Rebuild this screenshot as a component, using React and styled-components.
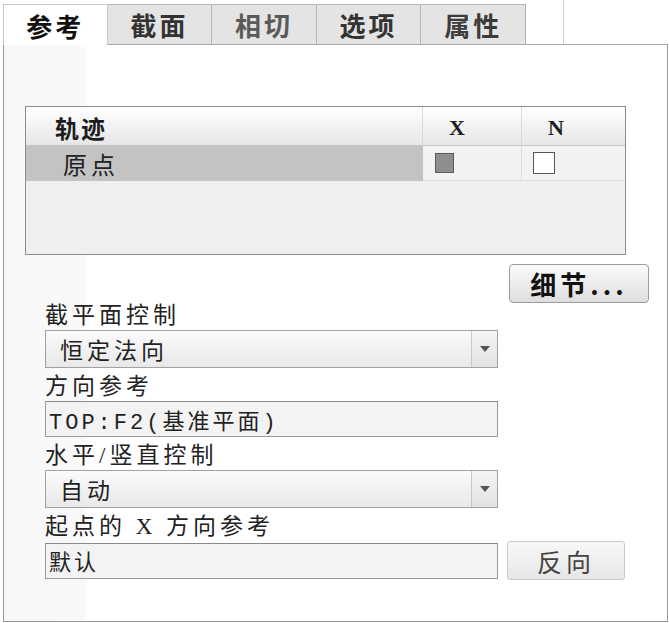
import styled, { createGlobalStyle } from "styled-components";

const GlobalStyle = createGlobalStyle`
    body {
        margin: 0;
        background: #ffffff;
        font-family: "Noto Sans CJK SC", "Noto Sans", sans-serif;
        color: #222222;
    }
`;

const tabs = [
    { label: "参考", active: true, color: "#111111" },
    { label: "截面", color: "#333333" },
    { label: "相切", color: "#5a5a5a" },
    { label: "选项", color: "#333333" },
    { label: "属性", color: "#3c3c3c" }
];

export default function App(){
    return(
        <>
            <GlobalStyle/>
            <Page>
                <TabBar>
                    {tabs.map((t) => (
                        <Tab key={t.label} $active={t.active} $color={t.color}>{t.label}</Tab>
                    ))}
                    <TabFiller/>
                </TabBar>
                <Panel>
                    <Table>
                        <HeadCell $first>轨迹</HeadCell>
                        <HeadCell $latin>X</HeadCell>
                        <HeadCell $latin $last>N</HeadCell>
                        <NameCell>原点</NameCell>
                        <CheckCell><Box $filled/></CheckCell>
                        <CheckCell $last><Box/></CheckCell>
                    </Table>
                    <DetailRow>
                        <DetailButton>细节...</DetailButton>
                    </DetailRow>
                    <Fields>
                        <Field>
                            <Label>截平面控制</Label>
                            <Select>
                                <SelectText>恒定法向</SelectText>
                                <Arrow/>
                            </Select>
                        </Field>
                        <Field>
                            <Label>方向参考</Label>
                            <Input>TOP:F2(基准平面)</Input>
                        </Field>
                        <Field>
                            <Label>水平/竖直控制</Label>
                            <Select>
                                <SelectText>自动</SelectText>
                                <Arrow/>
                            </Select>
                        </Field>
                        <Field>
                            <Label>起点的 X 方向参考</Label>
                            <InlineRow>
                                <Input>默认</Input>
                                <FlipButton>反向</FlipButton>
                            </InlineRow>
                        </Field>
                    </Fields>
                </Panel>
            </Page>
        </>
    );
}

const Page = styled.div`
    width: 669px;
    height: 623px;
    padding-left: 3px;
    box-sizing: border-box;
`;

const TabBar = styled.div`
    display: flex;
    align-items: flex-end;
    height: 45px;
    width: 665px;
    box-sizing: border-box;
    border-bottom: 1px solid #a8a8a8;
`;

const Tab = styled.div`
    width: 104.6px;
    box-sizing: border-box;
    display: flex;
    align-items: center;
    justify-content: center;
    font-size: 26px;
    font-weight: 700;
    letter-spacing: 3px;
    color: ${(p) => p.$color};
    background: ${(p) => p.$active ? "#ffffff" : "#e4e4e4"};
    border: 1px solid ${(p) => p.$active ? "#c8c8c8" : "#b4b4b4"};
    border-bottom: none;
    margin-bottom: ${(p) => p.$active ? "-1px" : "0"};
    height: ${(p) => p.$active ? "41px" : "40px"};
    & + & {
        border-left: none;
    }
`;

const TabFiller = styled.div`
    width: 37px;
    height: 45px;
    border-right: 1px solid #cfcfcf;
`;

const Panel = styled.div`
    width: 665px;
    height: 577px;
    box-sizing: border-box;
    border: 1px solid #9a9a9a;
    border-top: none;
    background: linear-gradient(to right, #f8f8f8 0, #f9f9f9 80px, #ffffff 84px);
    padding: 61px 0 0 21px;
`;

const Table = styled.div`
    width: 601px;
    height: 149px;
    box-sizing: border-box;
    border: 1px solid #8c8c8c;
    background: #efefef;
    display: grid;
    grid-template-columns: 397px 99px 1fr;
    grid-template-rows: 39px 35px;
    align-content: start;
`;

const HeadCell = styled.div`
    display: flex;
    align-items: center;
    background: linear-gradient(#ffffff, #e6e6e6);
    border-bottom: 1px solid #c6c6c6;
    border-right: ${(p) => p.$last ? "none" : "1px solid #dadada"};
    padding-left: ${(p) => p.$first ? "29px" : "26px"};
    padding-top: 3px;
    font-family: ${(p) => p.$latin ? "\"Liberation Serif\", serif" : "\"Noto Sans CJK SC\", sans-serif"};
    font-size: ${(p) => p.$latin ? "22px" : "24px"};
    font-weight: 700;
    letter-spacing: 2px;
    color: #1c1c1c;
`;

const NameCell = styled.div`
    display: flex;
    align-items: center;
    background: #c3c3c3;
    padding-left: 37px;
    font-size: 24px;
    letter-spacing: 4px;
    color: #222222;
`;

const CheckCell = styled.div`
    display: flex;
    align-items: center;
    padding-left: ${(p) => p.$last ? "11px" : "12px"};
    background: #f2f2f2;
    border-right: ${(p) => p.$last ? "none" : "1px solid #dedede"};
    border-bottom: 1px solid #dedede;
`;

const Box = styled.div`
    box-sizing: border-box;
    width: ${(p) => p.$filled ? "19px" : "22px"};
    height: ${(p) => p.$filled ? "20px" : "22px"};
    border: 1.5px solid ${(p) => p.$filled ? "#5a5a5a" : "#555555"};
    background: ${(p) => p.$filled ? "#8e8e8e" : "#ffffff"};
`;

const DetailRow = styled.div`
    display: flex;
    justify-content: flex-end;
    padding-right: 18px;
    margin-top: 9px;
`;

const DetailButton = styled.div`
    width: 140px;
    height: 39px;
    box-sizing: border-box;
    display: flex;
    align-items: center;
    justify-content: center;
    border: 1px solid #9c9c9c;
    border-radius: 4px;
    background: linear-gradient(#fafafa, #dedede);
    font-size: 26px;
    font-weight: 700;
    letter-spacing: 4px;
    color: #111111;
`;

const Fields = styled.div`
    display: flex;
    flex-direction: column;
    gap: 6px;
    padding-left: 20px;
`;

const Field = styled.div`
    display: flex;
    flex-direction: column;
    gap: 1px;
`;

const Label = styled.div`
    height: 26px;
    line-height: 26px;
    font-family: "Liberation Serif", "Noto Sans CJK SC", serif;
    font-size: 23px;
    letter-spacing: 4px;
    color: #222222;
    white-space: pre;
`;

const Select = styled.div`
    width: 453px;
    height: 38px;
    box-sizing: border-box;
    display: flex;
    border: 1px solid #a2a2a2;
    background: linear-gradient(#fbfbfb, #e8e8e8);
`;

const SelectText = styled.div`
    flex: 1;
    display: flex;
    align-items: center;
    padding-left: 14px;
    font-size: 23px;
    letter-spacing: 4px;
    color: #222222;
`;

const Arrow = styled.div`
    width: 25px;
    border-left: 1px solid #c8c8c8;
    background: linear-gradient(#f4f4f4, #e2e2e2);
    display: flex;
    align-items: center;
    justify-content: center;
    &::after {
        content: "";
        border-left: 5px solid transparent;
        border-right: 5px solid transparent;
        border-top: 6px solid #555555;
    }
`;

const Input = styled.div`
    width: 453px;
    height: 36px;
    box-sizing: border-box;
    display: flex;
    align-items: center;
    padding-left: 3px;
    border: 1px solid #9a9a9a;
    border-top-color: #8a8a8a;
    background: #f3f3f3;
    font-family: "Liberation Mono", "Noto Sans CJK SC", monospace;
    font-size: 22px;
    letter-spacing: 3px;
    color: #222222;
`;

const InlineRow = styled.div`
    display: flex;
    align-items: center;
    gap: 9px;
`;

const FlipButton = styled.div`
    width: 118px;
    height: 39px;
    box-sizing: border-box;
    display: flex;
    align-items: center;
    justify-content: center;
    border: 1px solid #c8c8c8;
    border-radius: 3px;
    background: linear-gradient(#f8f8f8, #e6e6e6);
    font-size: 25px;
    letter-spacing: 4px;
    color: #444444;
`;
